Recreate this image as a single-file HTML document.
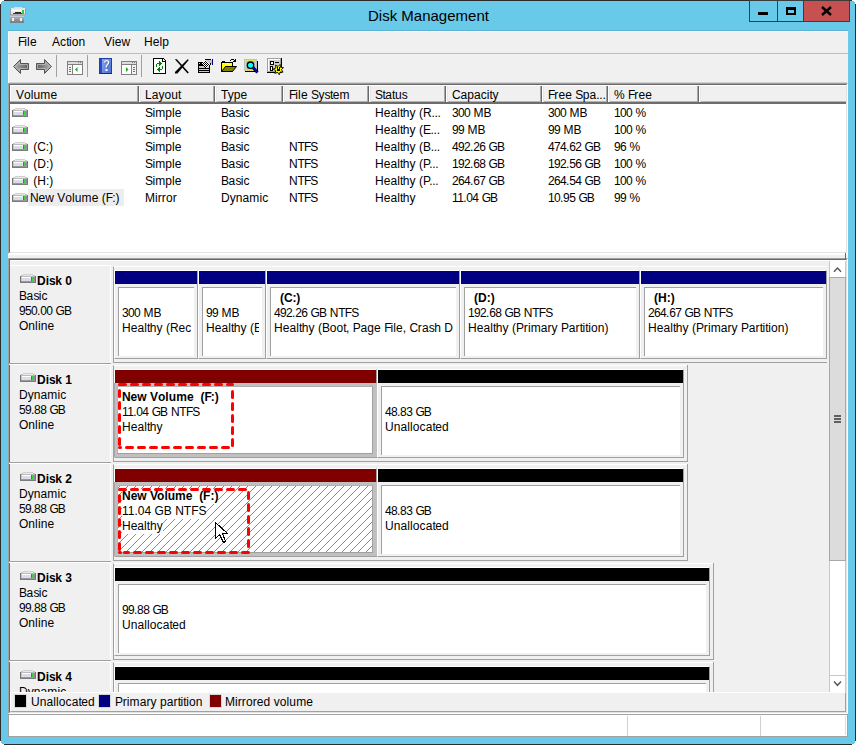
<!DOCTYPE html><html><head><meta charset="utf-8"><style>
html,body{margin:0;padding:0;}
body{width:856px;height:745px;position:relative;overflow:hidden;background:#fff;font-family:"Liberation Sans",sans-serif;}
div{position:absolute;box-sizing:border-box;}
.t{white-space:pre;line-height:15px;font-size:12px;}
svg{position:absolute;}
</style></head><body>
<div style="left:0px;top:0px;width:856px;height:745px;background:#2b2b2b;"></div>
<div style="left:1px;top:1px;width:854px;height:743px;background:#68c9e9;"></div>
<div style="left:0px;top:0px;width:4px;height:1px;background:#fff;"></div>
<div style="left:0px;top:0px;width:1px;height:4px;background:#fff;"></div>
<div style="left:1px;top:1px;width:1px;height:1px;background:#fff;"></div>
<div style="left:852px;top:0px;width:4px;height:1px;background:#fff;"></div>
<div style="left:855px;top:0px;width:1px;height:4px;background:#fff;"></div>
<div style="left:854px;top:1px;width:1px;height:1px;background:#fff;"></div>
<div style="left:0px;top:741px;width:1px;height:4px;background:#fff;"></div>
<div style="left:0px;top:744px;width:4px;height:1px;background:#fff;"></div>
<div style="left:1px;top:743px;width:1px;height:1px;background:#fff;"></div>
<div style="left:855px;top:741px;width:1px;height:4px;background:#fff;"></div>
<div style="left:852px;top:744px;width:4px;height:1px;background:#fff;"></div>
<div style="left:854px;top:743px;width:1px;height:1px;background:#fff;"></div>
<div style="left:2px;top:1px;width:2px;height:1px;background:#5ec8ea;"></div>
<div style="left:1px;top:2px;width:1px;height:2px;background:#5ec8ea;"></div>
<div style="left:852px;top:1px;width:2px;height:1px;background:#5ec8ea;"></div>
<div style="left:854px;top:2px;width:1px;height:2px;background:#5ec8ea;"></div>
<div style="left:1px;top:741px;width:1px;height:2px;background:#5ec8ea;"></div>
<div style="left:2px;top:743px;width:2px;height:1px;background:#5ec8ea;"></div>
<div style="left:854px;top:741px;width:1px;height:2px;background:#5ec8ea;"></div>
<div style="left:852px;top:743px;width:2px;height:1px;background:#5ec8ea;"></div>
<div style="left:8px;top:30px;width:840px;height:1px;background:#5cb4d4;"></div>
<div style="left:8px;top:31px;width:840px;height:706px;background:#f0f0f0;border-left:1px solid #fcfcfc;border-top:1px solid #fcfcfc;"></div>
<div class="t" style="left:368px;top:8.30px;font-size:15px;line-height:15px;color:#000;">Disk Management</div>
<svg style="left:10px;top:7px" width="16" height="16" viewBox="0 0 16 16" shape-rendering="crispEdges">
<rect x="4" y="0" width="8" height="1" fill="#dedede"/>
<rect x="1" y="1" width="14" height="1" fill="#e4e4e4"/>
<rect x="0" y="2" width="16" height="6" fill="#9a9a9e"/>
<rect x="1" y="2" width="14" height="5" fill="#e8e8f0"/>
<rect x="1" y="3" width="11" height="1" fill="#ffffff"/>
<rect x="5" y="5" width="6" height="1" fill="#2a2a2a"/>
<rect x="3" y="6" width="10" height="1" fill="#3a3a3a"/>
<rect x="12" y="3" width="2" height="4" fill="#2ed02e"/>
<rect x="1" y="7" width="14" height="1" fill="#b0b0b4"/>
<rect x="0" y="9" width="14" height="7" fill="#7c8288"/>
<rect x="0" y="9" width="14" height="1" fill="#c4ccd4"/>
<rect x="0" y="10" width="14" height="2" fill="#a2a8ae"/>
<rect x="0" y="12" width="14" height="2" fill="#8c9298"/>
<rect x="2" y="11" width="2" height="3" fill="#f2f2f2"/>
<rect x="10" y="11" width="2" height="3" fill="#f2f2f2"/>
</svg>
<div style="left:749px;top:0px;width:29px;height:22px;background:#68c9e9;border:1px solid #3c3c3c;"></div>
<div style="left:777px;top:0px;width:27px;height:22px;background:#68c9e9;border:1px solid #3c3c3c;"></div>
<div style="left:803px;top:0px;width:47px;height:22px;background:#c75050;border:1px solid #3c3c3c;"></div>
<div style="left:758px;top:12px;width:10px;height:3px;background:#000;"></div>
<div style="left:786px;top:7px;width:10px;height:8px;border:2px solid #000;border-top-width:3px;"></div>
<svg style="left:821px;top:6px" width="11" height="10" viewBox="0 0 11 10">
<path d="M1 1 L10 9 M10 1 L1 9" stroke="#000" stroke-width="2.4" stroke-linecap="butt"/></svg>
<div class="t" style="left:18px;top:35.34px;font-size:12px;line-height:15px;color:#000;"><span style="letter-spacing:-1.00px">F</span><span style="letter-spacing:0.10px">ile</span></div>
<div class="t" style="left:52px;top:35.34px;font-size:12px;line-height:15px;color:#000;">A<span style="letter-spacing:0.10px">c</span><span style="letter-spacing:-0.50px">t</span><span style="letter-spacing:0.10px">ion</span></div>
<div class="t" style="left:104px;top:35.34px;font-size:12px;line-height:15px;color:#000;">V<span style="letter-spacing:0.10px">iew</span></div>
<div class="t" style="left:144px;top:35.34px;font-size:12px;line-height:15px;color:#000;">H<span style="letter-spacing:0.10px">elp</span></div>
<div style="left:8px;top:53px;width:840px;height:1px;background:#bdbdbd;"></div>
<div style="left:56px;top:55px;width:1px;height:22px;background:#a0a0a0;"></div>
<div style="left:87px;top:55px;width:1px;height:22px;background:#a0a0a0;"></div>
<div style="left:141px;top:55px;width:1px;height:22px;background:#a0a0a0;"></div>
<svg style="left:12px;top:58px" width="42" height="17" viewBox="0 0 42 17">
<defs><linearGradient id="agl" x1="0" y1="0" x2="1" y2="0"><stop offset="0" stop-color="#b4b4b4"/><stop offset="1" stop-color="#5e5e5e"/></linearGradient>
<linearGradient id="agr" x1="1" y1="0" x2="0" y2="0"><stop offset="0" stop-color="#b4b4b4"/><stop offset="1" stop-color="#5e5e5e"/></linearGradient></defs>
<path d="M1.5 8.5 L8.5 1.5 L8.5 5.5 L16.5 5.5 L16.5 11.5 L8.5 11.5 L8.5 15.5 Z" fill="url(#agl)" stroke="#555" stroke-width="1"/>
<path d="M3.2 8.5 L7.5 4 L7.5 6.5 L15.5 6.5 L15.5 10.5 L7.5 10.5 L7.5 13 Z" fill="none" stroke="#c4c4c4" stroke-width="0.7"/>
<path d="M39.5 8.5 L32.5 1.5 L32.5 5.5 L24.5 5.5 L24.5 11.5 L32.5 11.5 L32.5 15.5 Z" fill="url(#agr)" stroke="#555" stroke-width="1"/>
<path d="M37.8 8.5 L33.5 4 L33.5 6.5 L25.5 6.5 L25.5 10.5 L33.5 10.5 L33.5 13 Z" fill="none" stroke="#c4c4c4" stroke-width="0.7"/>
</svg>
<svg style="left:67px;top:61px" width="16" height="14" viewBox="0 0 16 14" shape-rendering="crispEdges">
<rect x="0" y="0" width="16" height="14" fill="#808080"/>
<rect x="1" y="1" width="14" height="2" fill="#dcdcdc"/>
<rect x="11" y="1" width="1" height="1" fill="#808080"/><rect x="13" y="1" width="1" height="1" fill="#808080"/>
<rect x="1" y="4" width="4" height="9" fill="#f4f4f4"/>
<rect x="6" y="4" width="9" height="9" fill="#fff"/>
<rect x="2" y="6" width="2" height="1" fill="#3a78d0"/><rect x="2" y="8" width="2" height="1" fill="#3a78d0"/><rect x="2" y="10" width="2" height="1" fill="#3a78d0"/>
<path d="M8 8.5 L10.5 6 L10.5 11 Z" fill="#28a828" shape-rendering="auto"/>
</svg>
<svg style="left:99px;top:58px" width="13" height="16" viewBox="0 0 13 16">
<defs><linearGradient id="hg" x1="0" y1="0" x2="1" y2="1"><stop offset="0" stop-color="#88a8f0"/><stop offset="1" stop-color="#4a6ed8"/></linearGradient></defs>
<rect x="0" y="0" width="13" height="16" fill="#1e3fa8"/>
<rect x="3" y="1" width="9" height="14" fill="url(#hg)"/>
<rect x="1" y="1" width="2" height="14" fill="#2a4cc0"/>
<rect x="0" y="15" width="13" height="1" fill="#1a2a70"/>
<path d="M5.6 4.6 Q5.8 2.6 7.6 2.6 Q9.6 2.6 9.6 4.6 Q9.6 6 8.2 7 Q7.4 7.6 7.4 9.6" stroke="#202040" stroke-width="1.4" fill="none" transform="translate(0.6,0.6)" opacity="0.5"/>
<path d="M5.6 4.6 Q5.8 2.6 7.6 2.6 Q9.6 2.6 9.6 4.6 Q9.6 6 8.2 7 Q7.4 7.6 7.4 9.6" stroke="#fff" stroke-width="1.4" fill="none"/>
<rect x="6.5" y="11" width="2" height="2" fill="#fff"/>
</svg>
<svg style="left:121px;top:61px" width="16" height="14" viewBox="0 0 16 14" shape-rendering="crispEdges">
<rect x="0" y="0" width="16" height="14" fill="#808080"/>
<rect x="1" y="1" width="14" height="2" fill="#dcdcdc"/>
<rect x="11" y="1" width="1" height="1" fill="#808080"/><rect x="13" y="1" width="1" height="1" fill="#808080"/>
<rect x="1" y="4" width="9" height="9" fill="#fff"/>
<rect x="11" y="4" width="4" height="9" fill="#f4f4f4"/>
<rect x="12" y="6" width="2" height="1" fill="#3a78d0"/><rect x="12" y="8" width="2" height="1" fill="#3a78d0"/><rect x="12" y="10" width="2" height="1" fill="#3a78d0"/>
<path d="M5 6 L7.5 8.5 L5 11 Z" fill="#28a828" shape-rendering="auto"/>
</svg>
<svg style="left:153px;top:58px" width="13" height="16" viewBox="0 0 13 16" shape-rendering="crispEdges">
<rect x="0" y="0" width="13" height="16" fill="#000"/>
<rect x="1" y="1" width="11" height="14" fill="#fff"/>
<rect x="10" y="0" width="3" height="3" fill="#f0f0f0"/>
<rect x="9" y="1" width="1" height="3" fill="#000"/><rect x="9" y="3" width="3" height="1" fill="#000"/>
<rect x="10" y="0" width="1" height="1" fill="#000"/><rect x="11" y="1" width="1" height="1" fill="#000"/><rect x="12" y="2" width="1" height="1" fill="#000"/>
<rect x="10" y="2" width="1" height="1" fill="#fff"/>
<g fill="#008000">
<rect x="3" y="6" width="1" height="3"/><rect x="4" y="5" width="4" height="1"/>
<rect x="6" y="3" width="1" height="5"/><rect x="7" y="4" width="1" height="3"/><rect x="8" y="5" width="1" height="1"/>
<rect x="9" y="8" width="1" height="3"/><rect x="5" y="11" width="4" height="1"/>
<rect x="6" y="9" width="1" height="5"/><rect x="5" y="10" width="1" height="3"/><rect x="4" y="11" width="1" height="1"/>
</g></svg>
<svg style="left:174px;top:59px" width="15" height="15" viewBox="0 0 15 15">
<path d="M0.8 0.2 L2.8 0.2 L14.8 13.4 L13.6 14.4 Z" fill="#000"/>
<path d="M13.6 0.2 L14.8 0.9 L3.4 14.4 L0.8 14.4 L1.2 12.8 Z" fill="#000"/></svg>
<svg style="left:198px;top:58px" width="16" height="15" viewBox="0 0 16 15" shape-rendering="crispEdges"><rect x="0" y="4" width="12" height="11" fill="#000"/><rect x="1" y="8" width="10" height="2" fill="#c8c8c8"/><rect x="1" y="11" width="10" height="1" fill="#c8c8c8"/><rect x="1" y="13" width="10" height="1" fill="#c8c8c8"/><rect x="1" y="5" width="1" height="1" fill="#e0e0e0"/><rect x="8" y="2" width="6" height="4" fill="#c4c4c4"/><rect x="7" y="1" width="6" height="1" fill="#000"/><rect x="12" y="5" width="1" height="2" fill="#000"/><rect x="14" y="1" width="1" height="6" fill="#000080"/><rect x="7" y="2" width="1" height="1" fill="#fff"/><rect x="6" y="3" width="1" height="1" fill="#fff"/><rect x="7" y="3" width="1" height="1" fill="#000"/><rect x="8" y="3" width="1" height="1" fill="#fff"/><rect x="5" y="4" width="1" height="1" fill="#fff"/><rect x="6" y="4" width="1" height="1" fill="#000"/><rect x="7" y="4" width="1" height="1" fill="#fff"/><rect x="8" y="4" width="1" height="1" fill="#000"/><rect x="9" y="4" width="1" height="1" fill="#fff"/><rect x="4" y="5" width="1" height="1" fill="#fff"/><rect x="5" y="5" width="1" height="1" fill="#000"/><rect x="6" y="5" width="1" height="1" fill="#fff"/><rect x="7" y="5" width="1" height="1" fill="#000"/><rect x="8" y="5" width="1" height="1" fill="#fff"/><rect x="9" y="5" width="1" height="1" fill="#000"/><rect x="10" y="5" width="1" height="1" fill="#fff"/><rect x="4" y="6" width="1" height="1" fill="#000"/><rect x="5" y="6" width="1" height="1" fill="#fff"/><rect x="6" y="6" width="1" height="1" fill="#000"/><rect x="7" y="6" width="1" height="1" fill="#fff"/><rect x="8" y="6" width="1" height="1" fill="#000"/><rect x="9" y="6" width="1" height="1" fill="#fff"/><rect x="10" y="6" width="1" height="1" fill="#000"/><rect x="11" y="6" width="1" height="1" fill="#fff"/><rect x="5" y="7" width="1" height="1" fill="#000"/><rect x="6" y="7" width="1" height="1" fill="#fff"/><rect x="7" y="7" width="1" height="1" fill="#000"/><rect x="8" y="7" width="1" height="1" fill="#fff"/><rect x="9" y="7" width="1" height="1" fill="#000"/><rect x="10" y="7" width="1" height="1" fill="#fff"/><rect x="6" y="8" width="1" height="1" fill="#000"/><rect x="7" y="8" width="1" height="1" fill="#fff"/><rect x="8" y="8" width="1" height="1" fill="#000"/><rect x="9" y="8" width="1" height="1" fill="#fff"/><rect x="7" y="9" width="1" height="1" fill="#000"/><rect x="8" y="9" width="1" height="1" fill="#fff"/></svg>
<svg style="left:221px;top:58px" width="16" height="15" viewBox="0 0 16 15" shape-rendering="crispEdges">
<g fill="#000"><rect x="9" y="2" width="1" height="1"/><rect x="10" y="1" width="3" height="1"/><rect x="13" y="2" width="1" height="1"/><rect x="12" y="3" width="3" height="1"/><rect x="14" y="1" width="1" height="3"/></g>
<rect x="0" y="4" width="12" height="10" fill="#000"/>
<rect x="1" y="3" width="3" height="1" fill="#000"/>
<rect x="1" y="5" width="10" height="3" fill="#ffff00"/>
<rect x="1" y="8" width="3" height="4" fill="#ffff00"/>
<g fill="#fff"><rect x="2" y="5" width="1" height="1"/><rect x="4" y="6" width="1" height="1"/><rect x="6" y="5" width="1" height="1"/><rect x="8" y="6" width="1" height="1"/><rect x="2" y="7" width="1" height="1"/><rect x="2" y="9" width="1" height="1"/></g>
<path d="M4.5 8.5 L15.5 8.5 L11.5 13.5 L0.5 13.5 Z" fill="#808000" stroke="#000" stroke-width="1" shape-rendering="auto"/>
</svg>
<svg style="left:244px;top:58px" width="16" height="16" viewBox="0 0 16 16">
<rect x="0" y="1" width="13" height="12" fill="#c0c0c0"/>
<rect x="1" y="13" width="13" height="1" fill="#000"/><rect x="13" y="3" width="1" height="11" fill="#000"/>
<rect x="1.5" y="2.5" width="10" height="9.5" fill="none" stroke="#ffff00" stroke-width="1" stroke-dasharray="1 1"/>
<circle cx="6.5" cy="7.2" r="3.2" fill="#00ffff" stroke="#000" stroke-width="1.3"/>
<path d="M9 9.5 L13.5 14.5" stroke="#000" stroke-width="3"/>
<path d="M9.3 9.8 L13.2 14.2" stroke="#0000ff" stroke-width="1.5"/>
</svg>
<svg style="left:267px;top:58px" width="17" height="17" viewBox="0 0 17 17" shape-rendering="crispEdges">
<rect x="0" y="0" width="15" height="15" fill="#000"/>
<rect x="0" y="0" width="14" height="14" fill="#a0a0a0"/>
<rect x="1" y="1" width="12" height="12" fill="#fff"/>
<rect x="2" y="2" width="11" height="11" fill="#d0d0d0"/>
<rect x="3" y="3" width="4" height="4" fill="#000"/><rect x="4" y="4" width="2" height="2" fill="#fff"/>
<rect x="8" y="4" width="4" height="1" fill="#000"/>
<rect x="3" y="8" width="3" height="5" fill="#000"/><rect x="4" y="9" width="1" height="3" fill="#fff"/>
<polygon points="13.07,6.44 13.54,9.30 16.44,9.57 14.49,11.73 16.09,14.15 13.19,13.98 12.29,16.74 10.61,14.37 7.89,15.38 8.71,12.59 6.22,11.10 8.90,10.00 8.52,7.12 11.06,8.53" fill="#ffff00" stroke="#000" stroke-width="0.9" shape-rendering="auto"/>
<rect x="10" y="9" width="3" height="4" fill="#000"/><rect x="11" y="9" width="1" height="2" fill="#ffff00"/>
</svg>
<div style="left:9px;top:82px;width:838px;height:1px;background:#d0d0d0;"></div>
<div style="left:8px;top:83px;width:840px;height:171px;background:#fff;border-left:1px solid #a0a0a0;border-top:1px solid #a0a0a0;border-right:1px solid #fff;border-bottom:1px solid #fff;"></div>
<div style="left:9px;top:84px;width:838px;height:169px;border-left:1px solid #696969;border-top:1px solid #696969;border-right:1px solid #e3e3e3;border-bottom:1px solid #e3e3e3;"></div>
<div style="left:10px;top:85px;width:836px;height:19px;background:#f0f0f0;border-top:1px solid #fff;border-left:1px solid #fff;"></div>
<div style="left:10px;top:102px;width:836px;height:2px;background:#6d6d6d;"></div>
<div style="left:10px;top:101px;width:836px;height:1px;background:#b4b4b4;"></div>
<div style="left:137px;top:86px;width:1px;height:16px;background:#a8a8a8;"></div>
<div style="left:138px;top:86px;width:1px;height:16px;background:#696969;"></div>
<div style="left:139px;top:86px;width:1px;height:16px;background:#fff;"></div>
<div style="left:140px;top:86px;width:1px;height:16px;background:#e6e6e6;"></div>
<div style="left:213px;top:86px;width:1px;height:16px;background:#a8a8a8;"></div>
<div style="left:214px;top:86px;width:1px;height:16px;background:#696969;"></div>
<div style="left:215px;top:86px;width:1px;height:16px;background:#fff;"></div>
<div style="left:216px;top:86px;width:1px;height:16px;background:#e6e6e6;"></div>
<div style="left:281px;top:86px;width:1px;height:16px;background:#a8a8a8;"></div>
<div style="left:282px;top:86px;width:1px;height:16px;background:#696969;"></div>
<div style="left:283px;top:86px;width:1px;height:16px;background:#fff;"></div>
<div style="left:284px;top:86px;width:1px;height:16px;background:#e6e6e6;"></div>
<div style="left:367px;top:86px;width:1px;height:16px;background:#a8a8a8;"></div>
<div style="left:368px;top:86px;width:1px;height:16px;background:#696969;"></div>
<div style="left:369px;top:86px;width:1px;height:16px;background:#fff;"></div>
<div style="left:370px;top:86px;width:1px;height:16px;background:#e6e6e6;"></div>
<div style="left:444px;top:86px;width:1px;height:16px;background:#a8a8a8;"></div>
<div style="left:445px;top:86px;width:1px;height:16px;background:#696969;"></div>
<div style="left:446px;top:86px;width:1px;height:16px;background:#fff;"></div>
<div style="left:447px;top:86px;width:1px;height:16px;background:#e6e6e6;"></div>
<div style="left:540px;top:86px;width:1px;height:16px;background:#a8a8a8;"></div>
<div style="left:541px;top:86px;width:1px;height:16px;background:#696969;"></div>
<div style="left:542px;top:86px;width:1px;height:16px;background:#fff;"></div>
<div style="left:543px;top:86px;width:1px;height:16px;background:#e6e6e6;"></div>
<div style="left:606px;top:86px;width:1px;height:16px;background:#a8a8a8;"></div>
<div style="left:607px;top:86px;width:1px;height:16px;background:#696969;"></div>
<div style="left:608px;top:86px;width:1px;height:16px;background:#fff;"></div>
<div style="left:609px;top:86px;width:1px;height:16px;background:#e6e6e6;"></div>
<div style="left:697px;top:86px;width:1px;height:16px;background:#a8a8a8;"></div>
<div style="left:698px;top:86px;width:1px;height:16px;background:#696969;"></div>
<div style="left:699px;top:86px;width:1px;height:16px;background:#fff;"></div>
<div style="left:700px;top:86px;width:1px;height:16px;background:#e6e6e6;"></div>
<div class="t" style="left:16px;top:88.34px;font-size:12px;line-height:15px;color:#000;">V<span style="letter-spacing:0.10px">olume</span></div>
<div class="t" style="left:145px;top:88.34px;font-size:12px;line-height:15px;color:#000;">L<span style="letter-spacing:0.10px">ayou</span><span style="letter-spacing:-0.50px">t</span></div>
<div class="t" style="left:221px;top:88.34px;font-size:12px;line-height:15px;color:#000;"><span style="letter-spacing:-0.70px">T</span><span style="letter-spacing:0.10px">ype</span></div>
<div class="t" style="left:289px;top:88.34px;font-size:12px;line-height:15px;color:#000;"><span style="letter-spacing:-1.00px">F</span><span style="letter-spacing:0.10px">ile</span> <span style="letter-spacing:-0.60px">S</span><span style="letter-spacing:0.10px">y</span><span style="letter-spacing:-0.60px">s</span><span style="letter-spacing:-0.50px">t</span><span style="letter-spacing:0.10px">em</span></div>
<div class="t" style="left:375px;top:88.34px;font-size:12px;line-height:15px;color:#000;"><span style="letter-spacing:-0.60px">S</span><span style="letter-spacing:-0.50px">t</span><span style="letter-spacing:0.10px">a</span><span style="letter-spacing:-0.50px">t</span><span style="letter-spacing:0.10px">u</span><span style="letter-spacing:-0.60px">s</span></div>
<div class="t" style="left:452px;top:88.34px;font-size:12px;line-height:15px;color:#000;"><span style="letter-spacing:-0.30px">C</span><span style="letter-spacing:0.10px">apaci</span><span style="letter-spacing:-0.50px">t</span><span style="letter-spacing:0.10px">y</span></div>
<div class="t" style="left:548px;top:88.34px;font-size:12px;line-height:15px;color:#000;"><span style="letter-spacing:-1.00px">F</span><span style="letter-spacing:0.10px">ree</span> <span style="letter-spacing:-0.60px">S</span><span style="letter-spacing:0.10px">pa</span><span style="letter-spacing:-0.30px">...</span></div>
<div class="t" style="left:614px;top:88.34px;font-size:12px;line-height:15px;color:#000;">% <span style="letter-spacing:-1.00px">F</span><span style="letter-spacing:0.10px">ree</span></div>
<svg style="left:12px;top:108px" width="16" height="9" viewBox="0 0 16 9" shape-rendering="crispEdges">
<rect x="3" y="0" width="10" height="1" fill="#d0d0d0"/>
<rect x="1" y="1" width="14" height="1" fill="#c4c4c4"/><rect x="3" y="1" width="10" height="1" fill="#e8e8e8"/>
<rect x="0" y="2" width="16" height="6" fill="#747474"/>
<rect x="1" y="2" width="14" height="1" fill="#bcbcbc"/>
<rect x="1" y="3" width="14" height="4" fill="#c8c8cc"/>
<rect x="2" y="3" width="9" height="1" fill="#ffffff"/>
<rect x="2" y="4" width="9" height="3" fill="#dcdce8"/>
<rect x="11" y="3" width="1" height="4" fill="#7a5a9a"/>
<rect x="12" y="3" width="2" height="4" fill="#30dc30"/>
<rect x="14" y="3" width="1" height="4" fill="#9a8aaa"/>
<rect x="1" y="7" width="14" height="1" fill="#9a9a9a"/>
<rect x="0" y="8" width="16" height="1" fill="#7c7c7c"/>
</svg>
<div class="t" style="left:145px;top:106.34px;font-size:12px;line-height:15px;color:#000;"><span style="letter-spacing:-0.60px">S</span><span style="letter-spacing:0.10px">imple</span></div>
<div class="t" style="left:221px;top:106.34px;font-size:12px;line-height:15px;color:#000;"><span style="letter-spacing:-0.40px">B</span><span style="letter-spacing:0.10px">a</span><span style="letter-spacing:-0.60px">s</span><span style="letter-spacing:0.10px">ic</span></div>
<div class="t" style="left:375px;top:106.34px;font-size:12px;line-height:15px;color:#000;">H<span style="letter-spacing:0.10px">eal</span><span style="letter-spacing:-0.50px">t</span><span style="letter-spacing:0.10px">hy</span> (<span style="letter-spacing:-0.30px">R...</span></div>
<div class="t" style="left:452px;top:106.34px;font-size:12px;line-height:15px;color:#000;"><span style="letter-spacing:-0.65px">300</span> M<span style="letter-spacing:-0.40px">B</span></div>
<div class="t" style="left:548px;top:106.34px;font-size:12px;line-height:15px;color:#000;"><span style="letter-spacing:-0.65px">300</span> M<span style="letter-spacing:-0.40px">B</span></div>
<div class="t" style="left:614px;top:106.34px;font-size:12px;line-height:15px;color:#000;"><span style="letter-spacing:-0.65px">100</span> %</div>
<svg style="left:12px;top:125px" width="16" height="9" viewBox="0 0 16 9" shape-rendering="crispEdges">
<rect x="3" y="0" width="10" height="1" fill="#d0d0d0"/>
<rect x="1" y="1" width="14" height="1" fill="#c4c4c4"/><rect x="3" y="1" width="10" height="1" fill="#e8e8e8"/>
<rect x="0" y="2" width="16" height="6" fill="#747474"/>
<rect x="1" y="2" width="14" height="1" fill="#bcbcbc"/>
<rect x="1" y="3" width="14" height="4" fill="#c8c8cc"/>
<rect x="2" y="3" width="9" height="1" fill="#ffffff"/>
<rect x="2" y="4" width="9" height="3" fill="#dcdce8"/>
<rect x="11" y="3" width="1" height="4" fill="#7a5a9a"/>
<rect x="12" y="3" width="2" height="4" fill="#30dc30"/>
<rect x="14" y="3" width="1" height="4" fill="#9a8aaa"/>
<rect x="1" y="7" width="14" height="1" fill="#9a9a9a"/>
<rect x="0" y="8" width="16" height="1" fill="#7c7c7c"/>
</svg>
<div class="t" style="left:145px;top:123.34px;font-size:12px;line-height:15px;color:#000;"><span style="letter-spacing:-0.60px">S</span><span style="letter-spacing:0.10px">imple</span></div>
<div class="t" style="left:221px;top:123.34px;font-size:12px;line-height:15px;color:#000;"><span style="letter-spacing:-0.40px">B</span><span style="letter-spacing:0.10px">a</span><span style="letter-spacing:-0.60px">s</span><span style="letter-spacing:0.10px">ic</span></div>
<div class="t" style="left:375px;top:123.34px;font-size:12px;line-height:15px;color:#000;">H<span style="letter-spacing:0.10px">eal</span><span style="letter-spacing:-0.50px">t</span><span style="letter-spacing:0.10px">hy</span> (<span style="letter-spacing:-0.50px">E</span><span style="letter-spacing:-0.30px">...</span></div>
<div class="t" style="left:452px;top:123.34px;font-size:12px;line-height:15px;color:#000;"><span style="letter-spacing:-0.65px">99</span> M<span style="letter-spacing:-0.40px">B</span></div>
<div class="t" style="left:548px;top:123.34px;font-size:12px;line-height:15px;color:#000;"><span style="letter-spacing:-0.65px">99</span> M<span style="letter-spacing:-0.40px">B</span></div>
<div class="t" style="left:614px;top:123.34px;font-size:12px;line-height:15px;color:#000;"><span style="letter-spacing:-0.65px">100</span> %</div>
<svg style="left:12px;top:142px" width="16" height="9" viewBox="0 0 16 9" shape-rendering="crispEdges">
<rect x="3" y="0" width="10" height="1" fill="#d0d0d0"/>
<rect x="1" y="1" width="14" height="1" fill="#c4c4c4"/><rect x="3" y="1" width="10" height="1" fill="#e8e8e8"/>
<rect x="0" y="2" width="16" height="6" fill="#747474"/>
<rect x="1" y="2" width="14" height="1" fill="#bcbcbc"/>
<rect x="1" y="3" width="14" height="4" fill="#c8c8cc"/>
<rect x="2" y="3" width="9" height="1" fill="#ffffff"/>
<rect x="2" y="4" width="9" height="3" fill="#dcdce8"/>
<rect x="11" y="3" width="1" height="4" fill="#7a5a9a"/>
<rect x="12" y="3" width="2" height="4" fill="#30dc30"/>
<rect x="14" y="3" width="1" height="4" fill="#9a8aaa"/>
<rect x="1" y="7" width="14" height="1" fill="#9a9a9a"/>
<rect x="0" y="8" width="16" height="1" fill="#7c7c7c"/>
</svg>
<div class="t" style="left:30px;top:140.34px;font-size:12px;line-height:15px;color:#000;"> (<span style="letter-spacing:-0.30px">C</span>:)</div>
<div class="t" style="left:145px;top:140.34px;font-size:12px;line-height:15px;color:#000;"><span style="letter-spacing:-0.60px">S</span><span style="letter-spacing:0.10px">imple</span></div>
<div class="t" style="left:221px;top:140.34px;font-size:12px;line-height:15px;color:#000;"><span style="letter-spacing:-0.40px">B</span><span style="letter-spacing:0.10px">a</span><span style="letter-spacing:-0.60px">s</span><span style="letter-spacing:0.10px">ic</span></div>
<div class="t" style="left:289px;top:140.34px;font-size:12px;line-height:15px;color:#000;"><span style="letter-spacing:-0.30px">N</span><span style="letter-spacing:-0.70px">T</span><span style="letter-spacing:-1.00px">F</span><span style="letter-spacing:-0.60px">S</span></div>
<div class="t" style="left:375px;top:140.34px;font-size:12px;line-height:15px;color:#000;">H<span style="letter-spacing:0.10px">eal</span><span style="letter-spacing:-0.50px">t</span><span style="letter-spacing:0.10px">hy</span> (<span style="letter-spacing:-0.40px">B</span><span style="letter-spacing:-0.30px">...</span></div>
<div class="t" style="left:452px;top:140.34px;font-size:12px;line-height:15px;color:#000;"><span style="letter-spacing:-0.65px">492</span><span style="letter-spacing:-0.30px">.</span><span style="letter-spacing:-0.65px">26</span> <span style="letter-spacing:-1.00px">G</span><span style="letter-spacing:-0.40px">B</span></div>
<div class="t" style="left:548px;top:140.34px;font-size:12px;line-height:15px;color:#000;"><span style="letter-spacing:-0.65px">474</span><span style="letter-spacing:-0.30px">.</span><span style="letter-spacing:-0.65px">62</span> <span style="letter-spacing:-1.00px">G</span><span style="letter-spacing:-0.40px">B</span></div>
<div class="t" style="left:614px;top:140.34px;font-size:12px;line-height:15px;color:#000;"><span style="letter-spacing:-0.65px">96</span> %</div>
<svg style="left:12px;top:159px" width="16" height="9" viewBox="0 0 16 9" shape-rendering="crispEdges">
<rect x="3" y="0" width="10" height="1" fill="#d0d0d0"/>
<rect x="1" y="1" width="14" height="1" fill="#c4c4c4"/><rect x="3" y="1" width="10" height="1" fill="#e8e8e8"/>
<rect x="0" y="2" width="16" height="6" fill="#747474"/>
<rect x="1" y="2" width="14" height="1" fill="#bcbcbc"/>
<rect x="1" y="3" width="14" height="4" fill="#c8c8cc"/>
<rect x="2" y="3" width="9" height="1" fill="#ffffff"/>
<rect x="2" y="4" width="9" height="3" fill="#dcdce8"/>
<rect x="11" y="3" width="1" height="4" fill="#7a5a9a"/>
<rect x="12" y="3" width="2" height="4" fill="#30dc30"/>
<rect x="14" y="3" width="1" height="4" fill="#9a8aaa"/>
<rect x="1" y="7" width="14" height="1" fill="#9a9a9a"/>
<rect x="0" y="8" width="16" height="1" fill="#7c7c7c"/>
</svg>
<div class="t" style="left:30px;top:157.34px;font-size:12px;line-height:15px;color:#000;"> (D:)</div>
<div class="t" style="left:145px;top:157.34px;font-size:12px;line-height:15px;color:#000;"><span style="letter-spacing:-0.60px">S</span><span style="letter-spacing:0.10px">imple</span></div>
<div class="t" style="left:221px;top:157.34px;font-size:12px;line-height:15px;color:#000;"><span style="letter-spacing:-0.40px">B</span><span style="letter-spacing:0.10px">a</span><span style="letter-spacing:-0.60px">s</span><span style="letter-spacing:0.10px">ic</span></div>
<div class="t" style="left:289px;top:157.34px;font-size:12px;line-height:15px;color:#000;"><span style="letter-spacing:-0.30px">N</span><span style="letter-spacing:-0.70px">T</span><span style="letter-spacing:-1.00px">F</span><span style="letter-spacing:-0.60px">S</span></div>
<div class="t" style="left:375px;top:157.34px;font-size:12px;line-height:15px;color:#000;">H<span style="letter-spacing:0.10px">eal</span><span style="letter-spacing:-0.50px">t</span><span style="letter-spacing:0.10px">hy</span> (<span style="letter-spacing:-0.30px">P...</span></div>
<div class="t" style="left:452px;top:157.34px;font-size:12px;line-height:15px;color:#000;"><span style="letter-spacing:-0.65px">192</span><span style="letter-spacing:-0.30px">.</span><span style="letter-spacing:-0.65px">68</span> <span style="letter-spacing:-1.00px">G</span><span style="letter-spacing:-0.40px">B</span></div>
<div class="t" style="left:548px;top:157.34px;font-size:12px;line-height:15px;color:#000;"><span style="letter-spacing:-0.65px">192</span><span style="letter-spacing:-0.30px">.</span><span style="letter-spacing:-0.65px">56</span> <span style="letter-spacing:-1.00px">G</span><span style="letter-spacing:-0.40px">B</span></div>
<div class="t" style="left:614px;top:157.34px;font-size:12px;line-height:15px;color:#000;"><span style="letter-spacing:-0.65px">100</span> %</div>
<svg style="left:12px;top:176px" width="16" height="9" viewBox="0 0 16 9" shape-rendering="crispEdges">
<rect x="3" y="0" width="10" height="1" fill="#d0d0d0"/>
<rect x="1" y="1" width="14" height="1" fill="#c4c4c4"/><rect x="3" y="1" width="10" height="1" fill="#e8e8e8"/>
<rect x="0" y="2" width="16" height="6" fill="#747474"/>
<rect x="1" y="2" width="14" height="1" fill="#bcbcbc"/>
<rect x="1" y="3" width="14" height="4" fill="#c8c8cc"/>
<rect x="2" y="3" width="9" height="1" fill="#ffffff"/>
<rect x="2" y="4" width="9" height="3" fill="#dcdce8"/>
<rect x="11" y="3" width="1" height="4" fill="#7a5a9a"/>
<rect x="12" y="3" width="2" height="4" fill="#30dc30"/>
<rect x="14" y="3" width="1" height="4" fill="#9a8aaa"/>
<rect x="1" y="7" width="14" height="1" fill="#9a9a9a"/>
<rect x="0" y="8" width="16" height="1" fill="#7c7c7c"/>
</svg>
<div class="t" style="left:30px;top:174.34px;font-size:12px;line-height:15px;color:#000;"> (H:)</div>
<div class="t" style="left:145px;top:174.34px;font-size:12px;line-height:15px;color:#000;"><span style="letter-spacing:-0.60px">S</span><span style="letter-spacing:0.10px">imple</span></div>
<div class="t" style="left:221px;top:174.34px;font-size:12px;line-height:15px;color:#000;"><span style="letter-spacing:-0.40px">B</span><span style="letter-spacing:0.10px">a</span><span style="letter-spacing:-0.60px">s</span><span style="letter-spacing:0.10px">ic</span></div>
<div class="t" style="left:289px;top:174.34px;font-size:12px;line-height:15px;color:#000;"><span style="letter-spacing:-0.30px">N</span><span style="letter-spacing:-0.70px">T</span><span style="letter-spacing:-1.00px">F</span><span style="letter-spacing:-0.60px">S</span></div>
<div class="t" style="left:375px;top:174.34px;font-size:12px;line-height:15px;color:#000;">H<span style="letter-spacing:0.10px">eal</span><span style="letter-spacing:-0.50px">t</span><span style="letter-spacing:0.10px">hy</span> (<span style="letter-spacing:-0.30px">P...</span></div>
<div class="t" style="left:452px;top:174.34px;font-size:12px;line-height:15px;color:#000;"><span style="letter-spacing:-0.65px">264</span><span style="letter-spacing:-0.30px">.</span><span style="letter-spacing:-0.65px">67</span> <span style="letter-spacing:-1.00px">G</span><span style="letter-spacing:-0.40px">B</span></div>
<div class="t" style="left:548px;top:174.34px;font-size:12px;line-height:15px;color:#000;"><span style="letter-spacing:-0.65px">264</span><span style="letter-spacing:-0.30px">.</span><span style="letter-spacing:-0.65px">54</span> <span style="letter-spacing:-1.00px">G</span><span style="letter-spacing:-0.40px">B</span></div>
<div class="t" style="left:614px;top:174.34px;font-size:12px;line-height:15px;color:#000;"><span style="letter-spacing:-0.65px">100</span> %</div>
<svg style="left:12px;top:193px" width="16" height="9" viewBox="0 0 16 9" shape-rendering="crispEdges">
<rect x="3" y="0" width="10" height="1" fill="#d0d0d0"/>
<rect x="1" y="1" width="14" height="1" fill="#c4c4c4"/><rect x="3" y="1" width="10" height="1" fill="#e8e8e8"/>
<rect x="0" y="2" width="16" height="6" fill="#747474"/>
<rect x="1" y="2" width="14" height="1" fill="#bcbcbc"/>
<rect x="1" y="3" width="14" height="4" fill="#c8c8cc"/>
<rect x="2" y="3" width="9" height="1" fill="#ffffff"/>
<rect x="2" y="4" width="9" height="3" fill="#dcdce8"/>
<rect x="11" y="3" width="1" height="4" fill="#7a5a9a"/>
<rect x="12" y="3" width="2" height="4" fill="#30dc30"/>
<rect x="14" y="3" width="1" height="4" fill="#9a8aaa"/>
<rect x="1" y="7" width="14" height="1" fill="#9a9a9a"/>
<rect x="0" y="8" width="16" height="1" fill="#7c7c7c"/>
</svg>
<div style="left:28px;top:189px;width:96px;height:17px;background:#ededed;"></div>
<div class="t" style="left:30px;top:191.34px;font-size:12px;line-height:15px;color:#000;"><span style="letter-spacing:-0.30px">N</span><span style="letter-spacing:0.10px">ew</span> V<span style="letter-spacing:0.10px">olume</span> (<span style="letter-spacing:-1.00px">F</span>:)</div>
<div class="t" style="left:145px;top:191.34px;font-size:12px;line-height:15px;color:#000;">M<span style="letter-spacing:0.10px">irror</span></div>
<div class="t" style="left:221px;top:191.34px;font-size:12px;line-height:15px;color:#000;">D<span style="letter-spacing:0.10px">ynamic</span></div>
<div class="t" style="left:289px;top:191.34px;font-size:12px;line-height:15px;color:#000;"><span style="letter-spacing:-0.30px">N</span><span style="letter-spacing:-0.70px">T</span><span style="letter-spacing:-1.00px">F</span><span style="letter-spacing:-0.60px">S</span></div>
<div class="t" style="left:375px;top:191.34px;font-size:12px;line-height:15px;color:#000;">H<span style="letter-spacing:0.10px">eal</span><span style="letter-spacing:-0.50px">t</span><span style="letter-spacing:0.10px">hy</span></div>
<div class="t" style="left:452px;top:191.34px;font-size:12px;line-height:15px;color:#000;"><span style="letter-spacing:-0.65px">11</span><span style="letter-spacing:-0.30px">.</span><span style="letter-spacing:-0.65px">04</span> <span style="letter-spacing:-1.00px">G</span><span style="letter-spacing:-0.40px">B</span></div>
<div class="t" style="left:548px;top:191.34px;font-size:12px;line-height:15px;color:#000;"><span style="letter-spacing:-0.65px">10</span><span style="letter-spacing:-0.30px">.</span><span style="letter-spacing:-0.65px">95</span> <span style="letter-spacing:-1.00px">G</span><span style="letter-spacing:-0.40px">B</span></div>
<div class="t" style="left:614px;top:191.34px;font-size:12px;line-height:15px;color:#000;"><span style="letter-spacing:-0.65px">99</span> %</div>
<div style="left:8px;top:254px;width:840px;height:4px;background:#f0f0f0;border-top:1px solid #fcfcfc;"></div>
<div style="left:8px;top:258px;width:840px;height:456px;background:#f0f0f0;border-left:1px solid #a0a0a0;border-top:1px solid #a0a0a0;border-right:1px solid #fff;border-bottom:1px solid #fff;"></div>
<div style="left:9px;top:259px;width:838px;height:454px;border-left:1px solid #696969;border-top:1px solid #696969;border-right:1px solid #e3e3e3;border-bottom:1px solid #e3e3e3;"></div>
<div style="left:10px;top:260px;width:836px;height:1px;background:#fff;"></div>
<div style="left:845px;top:253px;width:1px;height:7px;background:#696969;"></div>
<div style="left:0;top:0;width:829px;height:692px;overflow:hidden">
<div style="left:10px;top:265px;width:100px;height:98px;border-top:1px solid #fff;"></div>
<div style="left:9px;top:363px;width:102px;height:1px;background:#a0a0a0;"></div>
<div style="left:9px;top:364px;width:102px;height:1px;background:#fff;"></div>
<div style="left:110px;top:265px;width:1px;height:98px;background:#fff;"></div>
<svg style="left:20px;top:274px" width="16" height="9" viewBox="0 0 16 9" shape-rendering="crispEdges">
<rect x="3" y="0" width="10" height="1" fill="#d0d0d0"/>
<rect x="1" y="1" width="14" height="1" fill="#c4c4c4"/><rect x="3" y="1" width="10" height="1" fill="#e8e8e8"/>
<rect x="0" y="2" width="16" height="6" fill="#747474"/>
<rect x="1" y="2" width="14" height="1" fill="#bcbcbc"/>
<rect x="1" y="3" width="14" height="4" fill="#c8c8cc"/>
<rect x="2" y="3" width="9" height="1" fill="#ffffff"/>
<rect x="2" y="4" width="9" height="3" fill="#dcdce8"/>
<rect x="11" y="3" width="1" height="4" fill="#7a5a9a"/>
<rect x="12" y="3" width="2" height="4" fill="#30dc30"/>
<rect x="14" y="3" width="1" height="4" fill="#9a8aaa"/>
<rect x="1" y="7" width="14" height="1" fill="#9a9a9a"/>
<rect x="0" y="8" width="16" height="1" fill="#7c7c7c"/>
</svg>
<div class="t" style="left:37px;top:274.34px;font-size:12px;line-height:15px;font-weight:bold;color:#000;">D<span style="letter-spacing:0.10px">i</span><span style="letter-spacing:-0.60px">s</span><span style="letter-spacing:0.10px">k</span> <span style="letter-spacing:-0.65px">0</span></div>
<div class="t" style="left:19px;top:289.34px;font-size:12px;line-height:15px;color:#000;"><span style="letter-spacing:-0.40px">B</span><span style="letter-spacing:0.10px">a</span><span style="letter-spacing:-0.60px">s</span><span style="letter-spacing:0.10px">ic</span></div>
<div class="t" style="left:19px;top:304.34px;font-size:12px;line-height:15px;color:#000;"><span style="letter-spacing:-0.65px">950</span><span style="letter-spacing:-0.30px">.</span><span style="letter-spacing:-0.65px">00</span> <span style="letter-spacing:-1.00px">G</span><span style="letter-spacing:-0.40px">B</span></div>
<div class="t" style="left:19px;top:319.34px;font-size:12px;line-height:15px;color:#000;">O<span style="letter-spacing:0.10px">nline</span></div>
<div style="left:113px;top:266px;width:714px;height:97px;border-left:1px solid #a0a0a0;border-top:1px solid #fff;"></div>
<div style="left:113px;top:362px;width:714px;height:1px;background:#a0a0a0;"></div>
<div style="left:114px;top:270px;width:84px;height:89px;background:#f0f0f0;border-top:1px solid #fff;border-left:1px solid #fff;border-right:1px solid #a0a0a0;border-bottom:1px solid #a0a0a0;"></div>
<div style="left:115px;top:271px;width:82px;height:13px;background:#000080;"></div>
<div style="left:118px;top:287px;width:76px;height:69px;background:#fff;border-top:1px solid #a0a0a0;border-left:1px solid #a0a0a0;"></div>
<div class="t" style="left:122px;top:306.34px;font-size:12px;line-height:15px;color:#000;width:69px;overflow:hidden;"><span style="letter-spacing:-0.65px">300</span> M<span style="letter-spacing:-0.40px">B</span></div>
<div class="t" style="left:122px;top:321.34px;font-size:12px;line-height:15px;color:#000;width:69px;overflow:hidden;">H<span style="letter-spacing:0.10px">eal</span><span style="letter-spacing:-0.50px">t</span><span style="letter-spacing:0.10px">hy</span> (<span style="letter-spacing:-0.30px">R</span><span style="letter-spacing:0.10px">ecovery</span> <span style="letter-spacing:-0.30px">P</span><span style="letter-spacing:0.10px">ar</span><span style="letter-spacing:-0.50px">t</span><span style="letter-spacing:0.10px">i</span><span style="letter-spacing:-0.50px">t</span><span style="letter-spacing:0.10px">ion</span>)</div>
<div style="left:198px;top:270px;width:68px;height:89px;background:#f0f0f0;border-top:1px solid #fff;border-left:1px solid #fff;border-right:1px solid #a0a0a0;border-bottom:1px solid #a0a0a0;"></div>
<div style="left:199px;top:271px;width:66px;height:13px;background:#000080;"></div>
<div style="left:202px;top:287px;width:60px;height:69px;background:#fff;border-top:1px solid #a0a0a0;border-left:1px solid #a0a0a0;"></div>
<div class="t" style="left:206px;top:306.34px;font-size:12px;line-height:15px;color:#000;width:53px;overflow:hidden;"><span style="letter-spacing:-0.65px">99</span> M<span style="letter-spacing:-0.40px">B</span></div>
<div class="t" style="left:206px;top:321.34px;font-size:12px;line-height:15px;color:#000;width:53px;overflow:hidden;">H<span style="letter-spacing:0.10px">eal</span><span style="letter-spacing:-0.50px">t</span><span style="letter-spacing:0.10px">hy</span> (<span style="letter-spacing:-0.50px">E</span><span style="letter-spacing:-1.00px">F</span>I <span style="letter-spacing:-0.60px">S</span><span style="letter-spacing:0.10px">y</span><span style="letter-spacing:-0.60px">s</span><span style="letter-spacing:-0.50px">t</span><span style="letter-spacing:0.10px">em</span> <span style="letter-spacing:-0.30px">P</span><span style="letter-spacing:0.10px">ar</span><span style="letter-spacing:-0.50px">t</span><span style="letter-spacing:0.10px">i</span><span style="letter-spacing:-0.50px">t</span><span style="letter-spacing:0.10px">ion</span>)</div>
<div style="left:266px;top:270px;width:194px;height:89px;background:#f0f0f0;border-top:1px solid #fff;border-left:1px solid #fff;border-right:1px solid #a0a0a0;border-bottom:1px solid #a0a0a0;"></div>
<div style="left:267px;top:271px;width:192px;height:13px;background:#000080;"></div>
<div style="left:270px;top:287px;width:186px;height:69px;background:#fff;border-top:1px solid #a0a0a0;border-left:1px solid #a0a0a0;"></div>
<div class="t" style="left:280px;top:291.34px;font-size:12px;line-height:15px;font-weight:bold;color:#000;">(<span style="letter-spacing:-0.30px">C</span>:)</div>
<div class="t" style="left:274px;top:306.34px;font-size:12px;line-height:15px;color:#000;width:179px;overflow:hidden;"><span style="letter-spacing:-0.65px">492</span><span style="letter-spacing:-0.30px">.</span><span style="letter-spacing:-0.65px">26</span> <span style="letter-spacing:-1.00px">G</span><span style="letter-spacing:-0.40px">B</span> <span style="letter-spacing:-0.30px">N</span><span style="letter-spacing:-0.70px">T</span><span style="letter-spacing:-1.00px">F</span><span style="letter-spacing:-0.60px">S</span></div>
<div class="t" style="left:274px;top:321.34px;font-size:12px;line-height:15px;color:#000;width:179px;overflow:hidden;">H<span style="letter-spacing:0.10px">eal</span><span style="letter-spacing:-0.50px">t</span><span style="letter-spacing:0.10px">hy</span> (<span style="letter-spacing:-0.40px">B</span><span style="letter-spacing:0.10px">oo</span><span style="letter-spacing:-0.50px">t</span>, <span style="letter-spacing:-0.30px">P</span><span style="letter-spacing:0.10px">age</span> <span style="letter-spacing:-1.00px">F</span><span style="letter-spacing:0.10px">ile</span>, <span style="letter-spacing:-0.30px">C</span><span style="letter-spacing:0.10px">ra</span><span style="letter-spacing:-0.60px">s</span><span style="letter-spacing:0.10px">h</span> D<span style="letter-spacing:0.10px">ump</span>, <span style="letter-spacing:-0.30px">P</span><span style="letter-spacing:0.10px">rimary</span> <span style="letter-spacing:-0.30px">P</span><span style="letter-spacing:0.10px">ar</span><span style="letter-spacing:-0.50px">t</span><span style="letter-spacing:0.10px">i</span><span style="letter-spacing:-0.50px">t</span><span style="letter-spacing:0.10px">ion</span>)</div>
<div style="left:460px;top:270px;width:180px;height:89px;background:#f0f0f0;border-top:1px solid #fff;border-left:1px solid #fff;border-right:1px solid #a0a0a0;border-bottom:1px solid #a0a0a0;"></div>
<div style="left:461px;top:271px;width:178px;height:13px;background:#000080;"></div>
<div style="left:464px;top:287px;width:172px;height:69px;background:#fff;border-top:1px solid #a0a0a0;border-left:1px solid #a0a0a0;"></div>
<div class="t" style="left:474px;top:291.34px;font-size:12px;line-height:15px;font-weight:bold;color:#000;">(D:)</div>
<div class="t" style="left:468px;top:306.34px;font-size:12px;line-height:15px;color:#000;width:165px;overflow:hidden;"><span style="letter-spacing:-0.65px">192</span><span style="letter-spacing:-0.30px">.</span><span style="letter-spacing:-0.65px">68</span> <span style="letter-spacing:-1.00px">G</span><span style="letter-spacing:-0.40px">B</span> <span style="letter-spacing:-0.30px">N</span><span style="letter-spacing:-0.70px">T</span><span style="letter-spacing:-1.00px">F</span><span style="letter-spacing:-0.60px">S</span></div>
<div class="t" style="left:468px;top:321.34px;font-size:12px;line-height:15px;color:#000;width:165px;overflow:hidden;">H<span style="letter-spacing:0.10px">eal</span><span style="letter-spacing:-0.50px">t</span><span style="letter-spacing:0.10px">hy</span> (<span style="letter-spacing:-0.30px">P</span><span style="letter-spacing:0.10px">rimary</span> <span style="letter-spacing:-0.30px">P</span><span style="letter-spacing:0.10px">ar</span><span style="letter-spacing:-0.50px">t</span><span style="letter-spacing:0.10px">i</span><span style="letter-spacing:-0.50px">t</span><span style="letter-spacing:0.10px">ion</span>)</div>
<div style="left:640px;top:270px;width:187px;height:89px;background:#f0f0f0;border-top:1px solid #fff;border-left:1px solid #fff;border-right:1px solid #a0a0a0;border-bottom:1px solid #a0a0a0;"></div>
<div style="left:641px;top:271px;width:185px;height:13px;background:#000080;"></div>
<div style="left:644px;top:287px;width:179px;height:69px;background:#fff;border-top:1px solid #a0a0a0;border-left:1px solid #a0a0a0;"></div>
<div class="t" style="left:654px;top:291.34px;font-size:12px;line-height:15px;font-weight:bold;color:#000;">(H:)</div>
<div class="t" style="left:648px;top:306.34px;font-size:12px;line-height:15px;color:#000;width:172px;overflow:hidden;"><span style="letter-spacing:-0.65px">264</span><span style="letter-spacing:-0.30px">.</span><span style="letter-spacing:-0.65px">67</span> <span style="letter-spacing:-1.00px">G</span><span style="letter-spacing:-0.40px">B</span> <span style="letter-spacing:-0.30px">N</span><span style="letter-spacing:-0.70px">T</span><span style="letter-spacing:-1.00px">F</span><span style="letter-spacing:-0.60px">S</span></div>
<div class="t" style="left:648px;top:321.34px;font-size:12px;line-height:15px;color:#000;width:172px;overflow:hidden;">H<span style="letter-spacing:0.10px">eal</span><span style="letter-spacing:-0.50px">t</span><span style="letter-spacing:0.10px">hy</span> (<span style="letter-spacing:-0.30px">P</span><span style="letter-spacing:0.10px">rimary</span> <span style="letter-spacing:-0.30px">P</span><span style="letter-spacing:0.10px">ar</span><span style="letter-spacing:-0.50px">t</span><span style="letter-spacing:0.10px">i</span><span style="letter-spacing:-0.50px">t</span><span style="letter-spacing:0.10px">ion</span>)</div>
<div style="left:10px;top:364px;width:100px;height:98px;border-top:1px solid #fff;"></div>
<div style="left:9px;top:462px;width:102px;height:1px;background:#a0a0a0;"></div>
<div style="left:9px;top:463px;width:102px;height:1px;background:#fff;"></div>
<div style="left:110px;top:364px;width:1px;height:98px;background:#fff;"></div>
<svg style="left:20px;top:373px" width="16" height="9" viewBox="0 0 16 9" shape-rendering="crispEdges">
<rect x="3" y="0" width="10" height="1" fill="#d0d0d0"/>
<rect x="1" y="1" width="14" height="1" fill="#c4c4c4"/><rect x="3" y="1" width="10" height="1" fill="#e8e8e8"/>
<rect x="0" y="2" width="16" height="6" fill="#747474"/>
<rect x="1" y="2" width="14" height="1" fill="#bcbcbc"/>
<rect x="1" y="3" width="14" height="4" fill="#c8c8cc"/>
<rect x="2" y="3" width="9" height="1" fill="#ffffff"/>
<rect x="2" y="4" width="9" height="3" fill="#dcdce8"/>
<rect x="11" y="3" width="1" height="4" fill="#7a5a9a"/>
<rect x="12" y="3" width="2" height="4" fill="#30dc30"/>
<rect x="14" y="3" width="1" height="4" fill="#9a8aaa"/>
<rect x="1" y="7" width="14" height="1" fill="#9a9a9a"/>
<rect x="0" y="8" width="16" height="1" fill="#7c7c7c"/>
</svg>
<div class="t" style="left:37px;top:373.34px;font-size:12px;line-height:15px;font-weight:bold;color:#000;">D<span style="letter-spacing:0.10px">i</span><span style="letter-spacing:-0.60px">s</span><span style="letter-spacing:0.10px">k</span> <span style="letter-spacing:-0.65px">1</span></div>
<div class="t" style="left:19px;top:388.34px;font-size:12px;line-height:15px;color:#000;">D<span style="letter-spacing:0.10px">ynamic</span></div>
<div class="t" style="left:19px;top:403.34px;font-size:12px;line-height:15px;color:#000;"><span style="letter-spacing:-0.65px">59</span><span style="letter-spacing:-0.30px">.</span><span style="letter-spacing:-0.65px">88</span> <span style="letter-spacing:-1.00px">G</span><span style="letter-spacing:-0.40px">B</span></div>
<div class="t" style="left:19px;top:418.34px;font-size:12px;line-height:15px;color:#000;">O<span style="letter-spacing:0.10px">nline</span></div>
<div style="left:113px;top:365px;width:575px;height:97px;border-left:1px solid #a0a0a0;border-top:1px solid #fff;"></div>
<div style="left:687px;top:365px;width:1px;height:96px;background:#a0a0a0;"></div>
<div style="left:113px;top:461px;width:575px;height:1px;background:#a0a0a0;"></div>
<div style="left:114px;top:369px;width:263px;height:89px;background:#f0f0f0;border-top:1px solid #fff;border-left:1px solid #fff;border-right:1px solid #a0a0a0;border-bottom:1px solid #a0a0a0;"></div>
<div style="left:115px;top:370px;width:261px;height:13px;background:#800000;"></div>
<div style="left:114px;top:383px;width:263px;height:74px;background:#c0c0c0;border-left:1px solid #a8a8a8;"></div>
<div style="left:117px;top:386px;width:256px;height:68px;background:#fff;border-top:1px solid #b0b0b0;border-left:1px solid #b4b4b4;border-right:1px solid #a0a0a0;border-bottom:1px solid #a0a0a0;"></div>
<div class="t" style="left:122px;top:390.34px;font-size:12px;line-height:15px;font-weight:bold;color:#000;width:248px;overflow:hidden;"><span style="letter-spacing:-0.30px">N</span><span style="letter-spacing:0.10px">ew</span> V<span style="letter-spacing:0.10px">olume</span>  (<span style="letter-spacing:-1.00px">F</span>:)</div>
<div class="t" style="left:122px;top:405.34px;font-size:12px;line-height:15px;color:#000;width:248px;overflow:hidden;"><span style="letter-spacing:-0.65px">11</span><span style="letter-spacing:-0.30px">.</span><span style="letter-spacing:-0.65px">04</span> <span style="letter-spacing:-1.00px">G</span><span style="letter-spacing:-0.40px">B</span> <span style="letter-spacing:-0.30px">N</span><span style="letter-spacing:-0.70px">T</span><span style="letter-spacing:-1.00px">F</span><span style="letter-spacing:-0.60px">S</span></div>
<div class="t" style="left:122px;top:420.34px;font-size:12px;line-height:15px;color:#000;width:248px;overflow:hidden;">H<span style="letter-spacing:0.10px">eal</span><span style="letter-spacing:-0.50px">t</span><span style="letter-spacing:0.10px">hy</span></div>
<div style="left:377px;top:369px;width:307px;height:89px;background:#f0f0f0;border-top:1px solid #fff;border-left:1px solid #fff;border-right:1px solid #a0a0a0;border-bottom:1px solid #a0a0a0;"></div>
<div style="left:378px;top:370px;width:305px;height:13px;background:#000000;"></div>
<div style="left:381px;top:386px;width:299px;height:69px;background:#fff;border-top:1px solid #a0a0a0;border-left:1px solid #a0a0a0;"></div>
<div class="t" style="left:385px;top:405.34px;font-size:12px;line-height:15px;color:#000;width:292px;overflow:hidden;"><span style="letter-spacing:-0.65px">48</span><span style="letter-spacing:-0.30px">.</span><span style="letter-spacing:-0.65px">83</span> <span style="letter-spacing:-1.00px">G</span><span style="letter-spacing:-0.40px">B</span></div>
<div class="t" style="left:385px;top:420.34px;font-size:12px;line-height:15px;color:#000;width:292px;overflow:hidden;">U<span style="letter-spacing:0.10px">nalloca</span><span style="letter-spacing:-0.50px">t</span><span style="letter-spacing:0.10px">ed</span></div>
<div style="left:10px;top:463px;width:100px;height:98px;border-top:1px solid #fff;"></div>
<div style="left:9px;top:561px;width:102px;height:1px;background:#a0a0a0;"></div>
<div style="left:9px;top:562px;width:102px;height:1px;background:#fff;"></div>
<div style="left:110px;top:463px;width:1px;height:98px;background:#fff;"></div>
<svg style="left:20px;top:472px" width="16" height="9" viewBox="0 0 16 9" shape-rendering="crispEdges">
<rect x="3" y="0" width="10" height="1" fill="#d0d0d0"/>
<rect x="1" y="1" width="14" height="1" fill="#c4c4c4"/><rect x="3" y="1" width="10" height="1" fill="#e8e8e8"/>
<rect x="0" y="2" width="16" height="6" fill="#747474"/>
<rect x="1" y="2" width="14" height="1" fill="#bcbcbc"/>
<rect x="1" y="3" width="14" height="4" fill="#c8c8cc"/>
<rect x="2" y="3" width="9" height="1" fill="#ffffff"/>
<rect x="2" y="4" width="9" height="3" fill="#dcdce8"/>
<rect x="11" y="3" width="1" height="4" fill="#7a5a9a"/>
<rect x="12" y="3" width="2" height="4" fill="#30dc30"/>
<rect x="14" y="3" width="1" height="4" fill="#9a8aaa"/>
<rect x="1" y="7" width="14" height="1" fill="#9a9a9a"/>
<rect x="0" y="8" width="16" height="1" fill="#7c7c7c"/>
</svg>
<div class="t" style="left:37px;top:472.34px;font-size:12px;line-height:15px;font-weight:bold;color:#000;">D<span style="letter-spacing:0.10px">i</span><span style="letter-spacing:-0.60px">s</span><span style="letter-spacing:0.10px">k</span> <span style="letter-spacing:-0.65px">2</span></div>
<div class="t" style="left:19px;top:487.34px;font-size:12px;line-height:15px;color:#000;">D<span style="letter-spacing:0.10px">ynamic</span></div>
<div class="t" style="left:19px;top:502.34px;font-size:12px;line-height:15px;color:#000;"><span style="letter-spacing:-0.65px">59</span><span style="letter-spacing:-0.30px">.</span><span style="letter-spacing:-0.65px">88</span> <span style="letter-spacing:-1.00px">G</span><span style="letter-spacing:-0.40px">B</span></div>
<div class="t" style="left:19px;top:517.34px;font-size:12px;line-height:15px;color:#000;">O<span style="letter-spacing:0.10px">nline</span></div>
<div style="left:113px;top:464px;width:575px;height:97px;border-left:1px solid #a0a0a0;border-top:1px solid #fff;"></div>
<div style="left:687px;top:464px;width:1px;height:96px;background:#a0a0a0;"></div>
<div style="left:113px;top:560px;width:575px;height:1px;background:#a0a0a0;"></div>
<div style="left:114px;top:468px;width:263px;height:89px;background:#f0f0f0;border-top:1px solid #fff;border-left:1px solid #fff;border-right:1px solid #a0a0a0;border-bottom:1px solid #a0a0a0;"></div>
<div style="left:115px;top:469px;width:261px;height:13px;background:#800000;"></div>
<div style="left:114px;top:482px;width:263px;height:74px;background:#c0c0c0;border-left:1px solid #a8a8a8;"></div>
<div style="left:117px;top:485px;width:256px;height:68px;background:#fff;border-top:1px solid #b0b0b0;border-left:1px solid #b4b4b4;border-right:1px solid #a0a0a0;border-bottom:1px solid #a0a0a0;"></div>
<svg style="left:118px;top:486px" width="254" height="66" shape-rendering="crispEdges">
<defs><pattern id="hp1" width="8" height="8" patternUnits="userSpaceOnUse"><rect x="0" y="1" width="1" height="1" fill="#8c8c8c"/><rect x="1" y="0" width="1" height="1" fill="#8c8c8c"/><rect x="2" y="7" width="1" height="1" fill="#8c8c8c"/><rect x="3" y="6" width="1" height="1" fill="#8c8c8c"/><rect x="4" y="5" width="1" height="1" fill="#8c8c8c"/><rect x="5" y="4" width="1" height="1" fill="#8c8c8c"/><rect x="6" y="3" width="1" height="1" fill="#8c8c8c"/><rect x="7" y="2" width="1" height="1" fill="#8c8c8c"/></pattern></defs><rect width="254" height="66" fill="#fff"/><rect width="254" height="66" fill="url(#hp1)"/></svg>
<div class="t" style="left:122px;top:489.00px;font-size:12px;line-height:15px;font-weight:bold;color:#000;background:#fff;display:inline-block;">New Volume  (F:)</div>
<div class="t" style="left:122px;top:504.00px;font-size:12px;line-height:15px;color:#000;background:#fff;display:inline-block;">11.04 GB NTFS</div>
<div class="t" style="left:122px;top:519.00px;font-size:12px;line-height:15px;color:#000;background:#fff;display:inline-block;">Healthy</div>
<div style="left:377px;top:468px;width:307px;height:89px;background:#f0f0f0;border-top:1px solid #fff;border-left:1px solid #fff;border-right:1px solid #a0a0a0;border-bottom:1px solid #a0a0a0;"></div>
<div style="left:378px;top:469px;width:305px;height:13px;background:#000000;"></div>
<div style="left:381px;top:485px;width:299px;height:69px;background:#fff;border-top:1px solid #a0a0a0;border-left:1px solid #a0a0a0;"></div>
<div class="t" style="left:385px;top:504.34px;font-size:12px;line-height:15px;color:#000;width:292px;overflow:hidden;"><span style="letter-spacing:-0.65px">48</span><span style="letter-spacing:-0.30px">.</span><span style="letter-spacing:-0.65px">83</span> <span style="letter-spacing:-1.00px">G</span><span style="letter-spacing:-0.40px">B</span></div>
<div class="t" style="left:385px;top:519.34px;font-size:12px;line-height:15px;color:#000;width:292px;overflow:hidden;">U<span style="letter-spacing:0.10px">nalloca</span><span style="letter-spacing:-0.50px">t</span><span style="letter-spacing:0.10px">ed</span></div>
<div style="left:10px;top:562px;width:100px;height:98px;border-top:1px solid #fff;"></div>
<div style="left:9px;top:660px;width:102px;height:1px;background:#a0a0a0;"></div>
<div style="left:9px;top:661px;width:102px;height:1px;background:#fff;"></div>
<div style="left:110px;top:562px;width:1px;height:98px;background:#fff;"></div>
<svg style="left:20px;top:571px" width="16" height="9" viewBox="0 0 16 9" shape-rendering="crispEdges">
<rect x="3" y="0" width="10" height="1" fill="#d0d0d0"/>
<rect x="1" y="1" width="14" height="1" fill="#c4c4c4"/><rect x="3" y="1" width="10" height="1" fill="#e8e8e8"/>
<rect x="0" y="2" width="16" height="6" fill="#747474"/>
<rect x="1" y="2" width="14" height="1" fill="#bcbcbc"/>
<rect x="1" y="3" width="14" height="4" fill="#c8c8cc"/>
<rect x="2" y="3" width="9" height="1" fill="#ffffff"/>
<rect x="2" y="4" width="9" height="3" fill="#dcdce8"/>
<rect x="11" y="3" width="1" height="4" fill="#7a5a9a"/>
<rect x="12" y="3" width="2" height="4" fill="#30dc30"/>
<rect x="14" y="3" width="1" height="4" fill="#9a8aaa"/>
<rect x="1" y="7" width="14" height="1" fill="#9a9a9a"/>
<rect x="0" y="8" width="16" height="1" fill="#7c7c7c"/>
</svg>
<div class="t" style="left:37px;top:571.34px;font-size:12px;line-height:15px;font-weight:bold;color:#000;">D<span style="letter-spacing:0.10px">i</span><span style="letter-spacing:-0.60px">s</span><span style="letter-spacing:0.10px">k</span> <span style="letter-spacing:-0.65px">3</span></div>
<div class="t" style="left:19px;top:586.34px;font-size:12px;line-height:15px;color:#000;"><span style="letter-spacing:-0.40px">B</span><span style="letter-spacing:0.10px">a</span><span style="letter-spacing:-0.60px">s</span><span style="letter-spacing:0.10px">ic</span></div>
<div class="t" style="left:19px;top:601.34px;font-size:12px;line-height:15px;color:#000;"><span style="letter-spacing:-0.65px">99</span><span style="letter-spacing:-0.30px">.</span><span style="letter-spacing:-0.65px">88</span> <span style="letter-spacing:-1.00px">G</span><span style="letter-spacing:-0.40px">B</span></div>
<div class="t" style="left:19px;top:616.34px;font-size:12px;line-height:15px;color:#000;">O<span style="letter-spacing:0.10px">nline</span></div>
<div style="left:113px;top:563px;width:601px;height:97px;border-left:1px solid #a0a0a0;border-top:1px solid #fff;"></div>
<div style="left:713px;top:563px;width:1px;height:96px;background:#a0a0a0;"></div>
<div style="left:113px;top:659px;width:601px;height:1px;background:#a0a0a0;"></div>
<div style="left:114px;top:567px;width:596px;height:89px;background:#f0f0f0;border-top:1px solid #fff;border-left:1px solid #fff;border-right:1px solid #a0a0a0;border-bottom:1px solid #a0a0a0;"></div>
<div style="left:115px;top:568px;width:594px;height:13px;background:#000000;"></div>
<div style="left:118px;top:584px;width:588px;height:69px;background:#fff;border-top:1px solid #a0a0a0;border-left:1px solid #a0a0a0;"></div>
<div class="t" style="left:122px;top:603.34px;font-size:12px;line-height:15px;color:#000;width:581px;overflow:hidden;"><span style="letter-spacing:-0.65px">99</span><span style="letter-spacing:-0.30px">.</span><span style="letter-spacing:-0.65px">88</span> <span style="letter-spacing:-1.00px">G</span><span style="letter-spacing:-0.40px">B</span></div>
<div class="t" style="left:122px;top:618.34px;font-size:12px;line-height:15px;color:#000;width:581px;overflow:hidden;">U<span style="letter-spacing:0.10px">nalloca</span><span style="letter-spacing:-0.50px">t</span><span style="letter-spacing:0.10px">ed</span></div>
<div style="left:10px;top:661px;width:100px;height:98px;border-top:1px solid #fff;"></div>
<div style="left:9px;top:759px;width:102px;height:1px;background:#a0a0a0;"></div>
<div style="left:9px;top:760px;width:102px;height:1px;background:#fff;"></div>
<div style="left:110px;top:661px;width:1px;height:98px;background:#fff;"></div>
<svg style="left:20px;top:670px" width="16" height="9" viewBox="0 0 16 9" shape-rendering="crispEdges">
<rect x="3" y="0" width="10" height="1" fill="#d0d0d0"/>
<rect x="1" y="1" width="14" height="1" fill="#c4c4c4"/><rect x="3" y="1" width="10" height="1" fill="#e8e8e8"/>
<rect x="0" y="2" width="16" height="6" fill="#747474"/>
<rect x="1" y="2" width="14" height="1" fill="#bcbcbc"/>
<rect x="1" y="3" width="14" height="4" fill="#c8c8cc"/>
<rect x="2" y="3" width="9" height="1" fill="#ffffff"/>
<rect x="2" y="4" width="9" height="3" fill="#dcdce8"/>
<rect x="11" y="3" width="1" height="4" fill="#7a5a9a"/>
<rect x="12" y="3" width="2" height="4" fill="#30dc30"/>
<rect x="14" y="3" width="1" height="4" fill="#9a8aaa"/>
<rect x="1" y="7" width="14" height="1" fill="#9a9a9a"/>
<rect x="0" y="8" width="16" height="1" fill="#7c7c7c"/>
</svg>
<div class="t" style="left:37px;top:670.34px;font-size:12px;line-height:15px;font-weight:bold;color:#000;">D<span style="letter-spacing:0.10px">i</span><span style="letter-spacing:-0.60px">s</span><span style="letter-spacing:0.10px">k</span> <span style="letter-spacing:-0.65px">4</span></div>
<div class="t" style="left:19px;top:685.34px;font-size:12px;line-height:15px;color:#000;">D<span style="letter-spacing:0.10px">ynamic</span></div>
<div class="t" style="left:19px;top:700.34px;font-size:12px;line-height:15px;color:#000;"><span style="letter-spacing:-0.65px">59</span><span style="letter-spacing:-0.30px">.</span><span style="letter-spacing:-0.65px">88</span> <span style="letter-spacing:-1.00px">G</span><span style="letter-spacing:-0.40px">B</span></div>
<div class="t" style="left:19px;top:715.34px;font-size:12px;line-height:15px;color:#000;">O<span style="letter-spacing:0.10px">nline</span></div>
<div style="left:113px;top:662px;width:601px;height:97px;border-left:1px solid #a0a0a0;border-top:1px solid #fff;"></div>
<div style="left:713px;top:662px;width:1px;height:96px;background:#a0a0a0;"></div>
<div style="left:113px;top:758px;width:601px;height:1px;background:#a0a0a0;"></div>
<div style="left:114px;top:666px;width:596px;height:89px;background:#f0f0f0;border-top:1px solid #fff;border-left:1px solid #fff;border-right:1px solid #a0a0a0;border-bottom:1px solid #a0a0a0;"></div>
<div style="left:115px;top:667px;width:594px;height:13px;background:#000000;"></div>
<div style="left:118px;top:683px;width:588px;height:69px;background:#fff;border-top:1px solid #a0a0a0;border-left:1px solid #a0a0a0;"></div>
<div class="t" style="left:122px;top:702.34px;font-size:12px;line-height:15px;color:#000;width:581px;overflow:hidden;"><span style="letter-spacing:-0.65px">59</span><span style="letter-spacing:-0.30px">.</span><span style="letter-spacing:-0.65px">88</span> <span style="letter-spacing:-1.00px">G</span><span style="letter-spacing:-0.40px">B</span></div>
<div class="t" style="left:122px;top:717.34px;font-size:12px;line-height:15px;color:#000;width:581px;overflow:hidden;">U<span style="letter-spacing:0.10px">nalloca</span><span style="letter-spacing:-0.50px">t</span><span style="letter-spacing:0.10px">ed</span></div>
<div style="left:118px;top:383px;width:9px;height:3px;background:#ff0000;border-radius:1.5px;"></div>
<div style="left:130px;top:383px;width:9px;height:3px;background:#ff0000;border-radius:1.5px;"></div>
<div style="left:142px;top:383px;width:9px;height:3px;background:#ff0000;border-radius:1.5px;"></div>
<div style="left:154px;top:383px;width:9px;height:3px;background:#ff0000;border-radius:1.5px;"></div>
<div style="left:166px;top:383px;width:9px;height:3px;background:#ff0000;border-radius:1.5px;"></div>
<div style="left:178px;top:383px;width:9px;height:3px;background:#ff0000;border-radius:1.5px;"></div>
<div style="left:190px;top:383px;width:9px;height:3px;background:#ff0000;border-radius:1.5px;"></div>
<div style="left:202px;top:383px;width:9px;height:3px;background:#ff0000;border-radius:1.5px;"></div>
<div style="left:214px;top:383px;width:9px;height:3px;background:#ff0000;border-radius:1.5px;"></div>
<div style="left:226px;top:383px;width:8px;height:3px;background:#ff0000;border-radius:1.5px;"></div>
<div style="left:118px;top:389px;width:3px;height:9px;background:#ff0000;border-radius:1.5px;"></div>
<div style="left:118px;top:401px;width:3px;height:9px;background:#ff0000;border-radius:1.5px;"></div>
<div style="left:118px;top:413px;width:3px;height:9px;background:#ff0000;border-radius:1.5px;"></div>
<div style="left:118px;top:425px;width:3px;height:9px;background:#ff0000;border-radius:1.5px;"></div>
<div style="left:118px;top:437px;width:3px;height:9px;background:#ff0000;border-radius:1.5px;"></div>
<div style="left:118px;top:446px;width:4px;height:3px;background:#ff0000;border-radius:1.5px;"></div>
<div style="left:231px;top:390px;width:3px;height:9px;background:#ff0000;border-radius:1.5px;"></div>
<div style="left:231px;top:402px;width:3px;height:9px;background:#ff0000;border-radius:1.5px;"></div>
<div style="left:231px;top:414px;width:3px;height:9px;background:#ff0000;border-radius:1.5px;"></div>
<div style="left:231px;top:426px;width:3px;height:9px;background:#ff0000;border-radius:1.5px;"></div>
<div style="left:231px;top:438px;width:3px;height:9px;background:#ff0000;border-radius:1.5px;"></div>
<div style="left:125px;top:446px;width:9px;height:3px;background:#ff0000;border-radius:1.5px;"></div>
<div style="left:137px;top:446px;width:9px;height:3px;background:#ff0000;border-radius:1.5px;"></div>
<div style="left:149px;top:446px;width:9px;height:3px;background:#ff0000;border-radius:1.5px;"></div>
<div style="left:161px;top:446px;width:9px;height:3px;background:#ff0000;border-radius:1.5px;"></div>
<div style="left:173px;top:446px;width:9px;height:3px;background:#ff0000;border-radius:1.5px;"></div>
<div style="left:185px;top:446px;width:9px;height:3px;background:#ff0000;border-radius:1.5px;"></div>
<div style="left:197px;top:446px;width:9px;height:3px;background:#ff0000;border-radius:1.5px;"></div>
<div style="left:209px;top:446px;width:9px;height:3px;background:#ff0000;border-radius:1.5px;"></div>
<div style="left:221px;top:446px;width:9px;height:3px;background:#ff0000;border-radius:1.5px;"></div>
<div style="left:118px;top:488px;width:9px;height:3px;background:#ff0000;border-radius:1.5px;"></div>
<div style="left:130px;top:488px;width:9px;height:3px;background:#ff0000;border-radius:1.5px;"></div>
<div style="left:142px;top:488px;width:9px;height:3px;background:#ff0000;border-radius:1.5px;"></div>
<div style="left:154px;top:488px;width:9px;height:3px;background:#ff0000;border-radius:1.5px;"></div>
<div style="left:166px;top:488px;width:9px;height:3px;background:#ff0000;border-radius:1.5px;"></div>
<div style="left:178px;top:488px;width:9px;height:3px;background:#ff0000;border-radius:1.5px;"></div>
<div style="left:190px;top:488px;width:9px;height:3px;background:#ff0000;border-radius:1.5px;"></div>
<div style="left:202px;top:488px;width:9px;height:3px;background:#ff0000;border-radius:1.5px;"></div>
<div style="left:214px;top:488px;width:9px;height:3px;background:#ff0000;border-radius:1.5px;"></div>
<div style="left:226px;top:488px;width:9px;height:3px;background:#ff0000;border-radius:1.5px;"></div>
<div style="left:238px;top:488px;width:9px;height:3px;background:#ff0000;border-radius:1.5px;"></div>
<div style="left:118px;top:494px;width:3px;height:9px;background:#ff0000;border-radius:1.5px;"></div>
<div style="left:118px;top:506px;width:3px;height:9px;background:#ff0000;border-radius:1.5px;"></div>
<div style="left:118px;top:518px;width:3px;height:9px;background:#ff0000;border-radius:1.5px;"></div>
<div style="left:118px;top:530px;width:3px;height:9px;background:#ff0000;border-radius:1.5px;"></div>
<div style="left:118px;top:542px;width:3px;height:9px;background:#ff0000;border-radius:1.5px;"></div>
<div style="left:118px;top:551px;width:4px;height:3px;background:#ff0000;border-radius:1.5px;"></div>
<div style="left:247px;top:491px;width:3px;height:9px;background:#ff0000;border-radius:1.5px;"></div>
<div style="left:247px;top:503px;width:3px;height:9px;background:#ff0000;border-radius:1.5px;"></div>
<div style="left:247px;top:515px;width:3px;height:9px;background:#ff0000;border-radius:1.5px;"></div>
<div style="left:247px;top:527px;width:3px;height:9px;background:#ff0000;border-radius:1.5px;"></div>
<div style="left:247px;top:539px;width:3px;height:9px;background:#ff0000;border-radius:1.5px;"></div>
<div style="left:241px;top:551px;width:9px;height:3px;background:#ff0000;border-radius:1.5px;"></div>
<div style="left:229px;top:551px;width:9px;height:3px;background:#ff0000;border-radius:1.5px;"></div>
<div style="left:217px;top:551px;width:9px;height:3px;background:#ff0000;border-radius:1.5px;"></div>
<div style="left:205px;top:551px;width:9px;height:3px;background:#ff0000;border-radius:1.5px;"></div>
<div style="left:193px;top:551px;width:9px;height:3px;background:#ff0000;border-radius:1.5px;"></div>
<div style="left:181px;top:551px;width:9px;height:3px;background:#ff0000;border-radius:1.5px;"></div>
<div style="left:169px;top:551px;width:9px;height:3px;background:#ff0000;border-radius:1.5px;"></div>
<div style="left:157px;top:551px;width:9px;height:3px;background:#ff0000;border-radius:1.5px;"></div>
<div style="left:145px;top:551px;width:9px;height:3px;background:#ff0000;border-radius:1.5px;"></div>
<div style="left:133px;top:551px;width:9px;height:3px;background:#ff0000;border-radius:1.5px;"></div>
<div style="left:123px;top:551px;width:7px;height:3px;background:#ff0000;border-radius:1.5px;"></div>
<svg style="left:210px;top:518px" width="24" height="30" viewBox="0 0 24 30" shape-rendering="crispEdges">
<path d="M5.5 4.5 L5.5 20.5 L9.5 16.5 L13.5 24.5 L15.5 23.5 L12.5 15.5 L17.5 15.5 Z" fill="#fff" stroke="#000" stroke-width="1" stroke-linejoin="miter"/></svg>
</div>
<div style="left:829px;top:261px;width:17px;height:431px;background:#fff;border-left:1px solid #c8c8c8;border-right:1px solid #c8c8c8;"></div>
<div style="left:829px;top:277px;width:17px;height:284px;background:#dcdcdc;border:1px solid #a8a8a8;"></div>
<div style="left:834px;top:415px;width:7px;height:2px;background:#606060;"></div>
<div style="left:834px;top:418px;width:7px;height:2px;background:#606060;"></div>
<div style="left:834px;top:421px;width:7px;height:2px;background:#606060;"></div>
<svg style="left:829px;top:261px" width="17" height="15" viewBox="0 0 17 15"><path d="M5 10.8 L8.5 7 L12 10.8" stroke="#5a5a5a" stroke-width="1.5" fill="none"/></svg>
<svg style="left:829px;top:676px" width="17" height="15" viewBox="0 0 17 15"><path d="M5 5.5 L8.5 9.3 L12 5.5" stroke="#5a5a5a" stroke-width="1.5" fill="none"/></svg>
<div style="left:829px;top:675px;width:17px;height:1px;background:#c8c8c8;"></div>
<div style="left:10px;top:692px;width:836px;height:20px;background:#f0f0f0;border-top:1px solid #fff;border-left:1px solid #fff;border-bottom:1px solid #a0a0a0;border-right:1px solid #a0a0a0;"></div>
<div style="left:14px;top:694px;width:13px;height:14px;background:#000;border:1px solid #d8d8d8;"></div>
<div class="t" style="left:31px;top:695.34px;font-size:12px;line-height:15px;color:#000;">U<span style="letter-spacing:0.10px">nalloca</span><span style="letter-spacing:-0.50px">t</span><span style="letter-spacing:0.10px">ed</span></div>
<div style="left:98px;top:694px;width:13px;height:14px;background:#000080;border:1px solid #d8d8d8;"></div>
<div class="t" style="left:115px;top:695.34px;font-size:12px;line-height:15px;color:#000;"><span style="letter-spacing:-0.30px">P</span><span style="letter-spacing:0.10px">rimary</span> <span style="letter-spacing:0.10px">par</span><span style="letter-spacing:-0.50px">t</span><span style="letter-spacing:0.10px">i</span><span style="letter-spacing:-0.50px">t</span><span style="letter-spacing:0.10px">ion</span></div>
<div style="left:209px;top:694px;width:13px;height:14px;background:#800000;border:1px solid #d8d8d8;"></div>
<div class="t" style="left:225px;top:695.34px;font-size:12px;line-height:15px;color:#000;">M<span style="letter-spacing:0.10px">irrored</span> <span style="letter-spacing:0.10px">volume</span></div>
<div style="left:8px;top:714px;width:840px;height:23px;background:#fff;border:1px solid #a0a0a0;"></div>
<div style="left:627px;top:716px;width:1px;height:20px;background:#d0d0d0;"></div>
<div style="left:760px;top:716px;width:1px;height:20px;background:#d0d0d0;"></div>
<div style="left:845px;top:716px;width:1px;height:19px;background:#dcdcdc;"></div>
</body></html>
